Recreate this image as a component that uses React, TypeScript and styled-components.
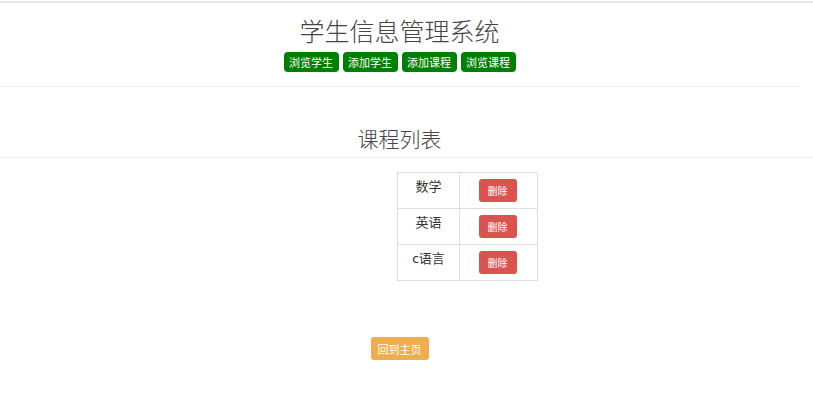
import styled, { createGlobalStyle } from 'styled-components'

const GlobalStyle = createGlobalStyle`
  html, body {
    margin: 0;
    padding: 0;
    background: #fff;
  }
  body {
    font-family: "Liberation Sans", "Noto Sans CJK SC", sans-serif;
    color: #333;
    font-size: 14px;
  }
`

const courses = ['数学', '英语', 'c语言']
const navItems = ['浏览学生', '添加学生', '添加课程', '浏览课程']

export default function App() {
  return (
    <>
      <GlobalStyle />
      <TopBar />
      <Header>
        <Title>学生信息管理系统</Title>
        <Nav>
          {navItems.map((item) => (
            <NavButton key={item}>{item}</NavButton>
          ))}
        </Nav>
      </Header>
      <HeaderRule />
      <SectionTitle>课程列表</SectionTitle>
      <SectionRule />
      <TableWrap>
        <CourseTable>
          <tbody>
            {courses.map((c) => (
              <tr key={c}>
                <NameCell>{c}</NameCell>
                <ActionCell>
                  <DeleteButton>删除</DeleteButton>
                </ActionCell>
              </tr>
            ))}
          </tbody>
        </CourseTable>
      </TableWrap>
      <Footer>
        <HomeButton>回到主页</HomeButton>
      </Footer>
    </>
  )
}

const TopBar = styled.div`
  height: 2px;
  margin-top: 1px;
  background: #e6e6e6;
`

const Header = styled.div`
  width: 799px;
  display: flex;
  flex-direction: column;
  align-items: center;
  padding-top: 13px;
`

const Title = styled.h1`
  margin: 0;
  font-size: 25px;
  font-weight: 300;
  line-height: 32px;
  color: #444;
`

const Nav = styled.div`
  display: flex;
  gap: 4px;
  margin-top: 4px;
`

const NavButton = styled.button`
  height: 20px;
  width: 55px;
  padding: 0;
  border: none;
  border-radius: 4px;
  background: #008000;
  color: #fff;
  font-family: "Noto Sans CJK SC", sans-serif;
  font-size: 11px;
  line-height: 20px;
`

const HeaderRule = styled.div`
  width: 800px;
  height: 1px;
  background: #f0f0f0;
  margin-top: 14px;
`

const SectionTitle = styled.h2`
  width: 799px;
  margin: 38px 0 0;
  text-align: center;
  font-size: 21px;
  font-weight: 300;
  line-height: 30px;
  color: #444;
`

const SectionRule = styled.div`
  height: 1px;
  background: #eee;
  margin-top: 2px;
`

const TableWrap = styled.div`
  padding-left: 397px;
  margin-top: 14px;
`

const CourseTable = styled.table`
  border-collapse: collapse;
`

const NameCell = styled.td`
  width: 62px;
  height: 36px;
  padding: 5px 0 0;
  box-sizing: border-box;
  border: 1px solid #ddd;
  text-align: center;
  vertical-align: top;
  font-family: "Noto Sans CJK SC", sans-serif;
  font-size: 13px;
  line-height: 16px;
  color: #333;
`

const ActionCell = styled.td`
  width: 78px;
  height: 36px;
  padding: 6px 2px 0 0;
  box-sizing: border-box;
  border: 1px solid #ddd;
  text-align: center;
  vertical-align: top;
`

const DeleteButton = styled.button`
  width: 38px;
  height: 23px;
  padding: 0;
  border: none;
  border-radius: 3px;
  background: #d9534f;
  color: #fff;
  font-family: "Noto Sans CJK SC", sans-serif;
  font-size: 10px;
`

const Footer = styled.div`
  width: 799px;
  display: flex;
  justify-content: center;
  margin-top: 56px;
`

const HomeButton = styled.button`
  width: 58px;
  height: 23px;
  padding: 0;
  border: none;
  border-radius: 3px;
  background: #f0ad4e;
  color: #fff;
  font-family: "Noto Sans CJK SC", sans-serif;
  font-size: 11px;
`
